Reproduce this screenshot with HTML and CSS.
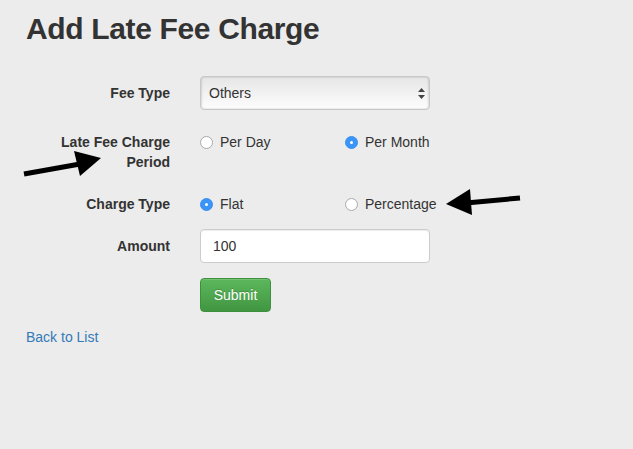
FILE: index.html
```html
<!DOCTYPE html>
<html>
<head>
<meta charset="utf-8">
<link rel="stylesheet" href="styles.css">
</head>
<body>
<div class="page">
  <h2 class="title">Add Late Fee Charge</h2>
  <form class="form">
    <div class="row">
      <label class="lbl">Fee Type</label>
      <div class="field">
        <div class="select">
          <span class="select-text">Others</span>
          <svg class="select-arrows" width="7" height="11" viewBox="0 0 7 11"><path d="M3.5 0 L7 4 L0 4 Z M0 7 L7 7 L3.5 11 Z" fill="#444"/></svg>
        </div>
      </div>
    </div>
    <div class="row">
      <label class="lbl">Late Fee Charge<br>Period</label>
      <div class="field radios">
        <label class="radio"><span class="dot"></span>Per Day</label>
        <label class="radio"><span class="dot on"></span>Per Month</label>
      </div>
    </div>
    <div class="row">
      <label class="lbl">Charge Type</label>
      <div class="field radios">
        <label class="radio"><span class="dot on"></span>Flat</label>
        <label class="radio"><span class="dot"></span>Percentage</label>
      </div>
    </div>
    <div class="row">
      <label class="lbl">Amount</label>
      <div class="field">
        <div class="input">100</div>
      </div>
    </div>
    <div class="row">
      <span class="lbl"></span>
      <div class="field">
        <button type="button" class="btn">Submit</button>
      </div>
    </div>
  </form>
  <a class="back" href="#">Back to List</a>
</div>
<svg class="arrows" width="633" height="449" viewBox="0 0 633 449">
  <path d="M24 174 L80 164" stroke="#000" stroke-width="5" fill="none"/>
  <path d="M74 151 L101 158 L80 176 Z" fill="#000"/>
  <path d="M520 198 L466 203" stroke="#000" stroke-width="5" fill="none"/>
  <path d="M470 189 L446 204 L472 215 Z" fill="#000"/>
</svg>
</body>
</html>
```
FILE: styles.css
```css
html, body {
  margin: 0;
  padding: 0;
}
body {
  background: #ececec;
  font-family: "Liberation Sans", Arial, sans-serif;
  font-size: 14px;
  line-height: 20px;
  color: #333;
  width: 633px;
  height: 449px;
  overflow: hidden;
  position: relative;
}
.page {
  padding: 0 0 0 26px;
}
.title {
  margin: 0;
  padding-top: 12px;
  font-size: 30px;
  line-height: 33px;
  font-weight: bold;
  color: #333;
  letter-spacing: -0.35px;
}
.form {
  margin-top: 31px;
  display: flex;
  flex-direction: column;
  gap: 15px;
}
.row {
  display: grid;
  grid-template-columns: 144px 230px;
  column-gap: 30px;
}
.lbl {
  text-align: right;
  font-weight: bold;
  padding-top: 7px;
  line-height: 20px;
}
.select {
  position: relative;
  height: 32px;
  border: 1px solid #c8c8c8;
  border-radius: 4px;
  background: linear-gradient(#e6e6e6, #fdfdfd);
  box-shadow: inset 1px 0 2px rgba(0,0,0,0.12), inset -1px 0 2px rgba(0,0,0,0.12);
  display: flex;
  align-items: center;
  padding-left: 8px;
  color: #333;
}
.select-arrows {
  position: absolute;
  right: 4px;
  top: 11px;
}
.radios {
  display: grid;
  grid-template-columns: 145px 85px;
  padding-top: 7px;
  min-height: 20px;
}
.radio {
  display: flex;
  align-items: center;
  height: 20px;
  white-space: nowrap;
}
.dot {
  width: 11px;
  height: 11px;
  border: 1px solid #a9a9a9;
  border-radius: 50%;
  background: #fff;
  margin-right: 7px;
  margin-top: 1px;
  flex: none;
  position: relative;
}
.dot.on {
  border-color: #3a8ff0;
  background: #3b94f7;
}
.dot.on::after {
  content: "";
  position: absolute;
  left: 4px;
  top: 4px;
  width: 3px;
  height: 3px;
  border-radius: 50%;
  background: #fff;
}
.input {
  height: 32px;
  border: 1px solid #ccc;
  border-radius: 4px;
  background: #fff;
  padding: 0 12px;
  display: flex;
  align-items: center;
  box-shadow: inset 0 1px 1px rgba(0,0,0,0.075);
  color: #333;
}
.btn {
  width: 71px;
  height: 34px;
  border: 1px solid #3e8f3e;
  border-radius: 4px;
  background: linear-gradient(#5cb85c, #419641);
  color: #fff;
  font-family: "Liberation Sans", Arial, sans-serif;
  font-size: 14px;
  padding: 0;
  text-shadow: 0 -1px 0 rgba(0,0,0,0.2);
  box-shadow: inset 0 1px 0 rgba(255,255,255,0.15);
}
.back {
  display: block;
  margin-top: 15px;
  color: #337ab7;
  text-decoration: none;
  line-height: 20px;
}
.arrows {
  position: absolute;
  left: 0;
  top: 0;
  pointer-events: none;
}
```
